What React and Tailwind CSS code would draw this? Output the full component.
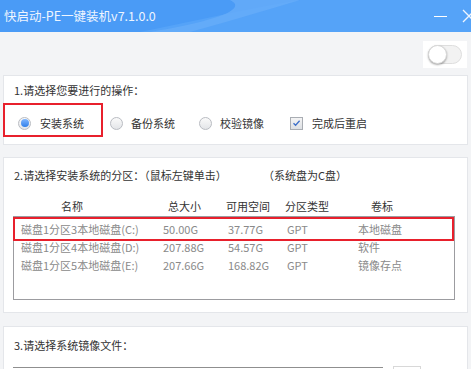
import React from "react";

const font = { fontFamily: '"Noto Sans CJK SC", "Noto Sans", sans-serif' };

function Radio({ checked }) {
  return (
    <span className="relative flex h-[13px] w-[13px] items-center justify-center rounded-full border border-[#b9bcc2] bg-gradient-to-b from-[#fafafa] to-[#e3e5e8]">
      {checked && <span className="h-[8px] w-[8px] rounded-full bg-gradient-to-b from-[#7fb6ff] to-[#2f7fea]" />}
    </span>
  );
}

function Checkbox() {
  return (
    <span className="flex h-[13px] w-[13px] items-center justify-center border border-[#a9adb3] bg-gradient-to-b from-[#f4f4f4] to-[#dde0e4]">
      <svg width="9" height="8" viewBox="0 0 9 8">
        <path d="M1.5 4.2 L3.6 6.2 L7.6 1.8" fill="none" stroke="#3d6fc9" strokeWidth="1.3" />
      </svg>
    </span>
  );
}

const rows = [
  ["磁盘1分区3本地磁盘(C:)", "50.00G", "37.77G", "GPT", "本地磁盘"],
  ["磁盘1分区4本地磁盘(D:)", "207.88G", "54.57G", "GPT", "软件"],
  ["磁盘1分区5本地磁盘(E:)", "207.66G", "168.82G", "GPT", "镜像存点"],
];

export default function App() {
  return (
    <div className="h-[369px] w-[471px] overflow-hidden bg-[#f3f4f6] text-[11px] text-[#333]" style={font}>
      {/* title bar */}
      <div className="relative flex h-[32px] items-center overflow-hidden bg-[#4a9bf6]">
        <svg className="absolute left-0 top-0" width="471" height="32" viewBox="0 0 471 32">
          <path d="M140 32 C 200 20, 250 8, 300 0 L 471 0 L 471 32 Z" fill="#55a3f8" />
          <path d="M150 32 C 210 22, 250 10, 230 0 L 300 0 C 260 12, 220 24, 190 32 Z" fill="#66adf9" opacity="0.8" />
        </svg>
        <span className="relative ml-[4px] text-[12.5px] text-[#eef5ff]">快启动-PE一键装机v7.1.0.0</span>
        <span className="relative ml-auto mr-[24px] h-[1px] w-[13px] bg-white" />
        <svg className="absolute left-[462px] top-[9px]" width="14" height="14" viewBox="0 0 14 14">
          <path d="M1 1 L13 13 M13 1 L1 13" stroke="#eef5ff" strokeWidth="1.3" />
        </svg>
      </div>

      {/* toggle */}
      <div className="flex h-[43px] justify-end pr-[4px] pt-[9px]">
        <div className="flex h-[27px] w-[44px] items-center justify-center bg-white">
          <div className="relative h-[19px] w-[34px] rounded-full border border-[#dedede] bg-[#f2f2f2]">
            <div className="absolute left-[-1px] top-[-1px] h-[19px] w-[19px] rounded-full border border-[#d8d8d8] bg-white shadow-[0_1px_2px_rgba(0,0,0,0.35)]" />
          </div>
        </div>
      </div>

      {/* panel 1 */}
      <div className="relative mx-[3px] h-[70px] border border-[#e4e6ea] bg-white">
        <div className="pl-[10px] pt-[6px] leading-[16px]">1.请选择您要进行的操作：</div>
        <div className="mt-[17px] flex items-center pl-[14px] leading-[16px]">
          <div className="flex w-[92px] items-center">
            <Radio checked />
            <span className="ml-[9px]">安装系统</span>
          </div>
          <div className="flex w-[89px] items-center">
            <Radio />
            <span className="ml-[8px]">备份系统</span>
          </div>
          <div className="flex w-[91px] items-center">
            <Radio />
            <span className="ml-[8px]">校验镜像</span>
          </div>
          <div className="flex items-center">
            <Checkbox />
            <span className="ml-[9px]">完成后重启</span>
          </div>
        </div>
        <div className="absolute left-[-1px] top-[27px] h-[34px] w-[100px] border-2 border-[#e8202c]" />
      </div>

      {/* panel 2 */}
      <div className="mx-[3px] mt-[12px] h-[156px] border border-[#e4e6ea] bg-white">
        <div className="flex pl-[10px] pt-[9px] leading-[16px]">
          <span className="w-[249px]">2.请选择安装系统的分区：（鼠标左键单击）</span>
          <span>（系统盘为C盘）</span>
        </div>
        <div className="mt-[15px] flex leading-[16px]">
          <span className="ml-[57px] w-[107px]">名称</span>
          <span className="w-[58px]">总大小</span>
          <span className="w-[59px]">可用空间</span>
          <span className="w-[86px]">分区类型</span>
          <span>卷标</span>
        </div>
        <div className="relative ml-[9px] mt-[2px] h-[84px] w-[442px] border border-[#9c9ca0] pt-[3px] text-[#8a8a8a]">
          {rows.map((r, i) => (
            <div key={i} className="flex h-[18px] items-center pl-[7px]">
              <span className="w-[142px]">{r[0]}</span>
              <span className="w-[65px]">{r[1]}</span>
              <span className="w-[59px]">{r[2]}</span>
              <span className="w-[71px]">{r[3]}</span>
              <span>{r[4]}</span>
            </div>
          ))}
          <div className="absolute left-[-1px] top-[0px] h-[24px] w-[441px] border-2 border-[#e8202c]" />
        </div>
      </div>

      {/* panel 3 */}
      <div className="mx-[3px] mt-[13px] h-[60px] border border-[#e4e6ea] bg-white">
        <div className="pl-[10px] pt-[10px] leading-[16px]">3.请选择系统镜像文件：</div>
        <div className="mt-[14px] flex">
          <div className="ml-[9px] h-[6px] w-[370px] border-t border-[#8f8f8f]" />
          <div className="ml-[10px] mt-[-1px] h-[6px] w-[28px] border border-[#d8d8d8] bg-white" />
        </div>
      </div>
    </div>
  );
}
